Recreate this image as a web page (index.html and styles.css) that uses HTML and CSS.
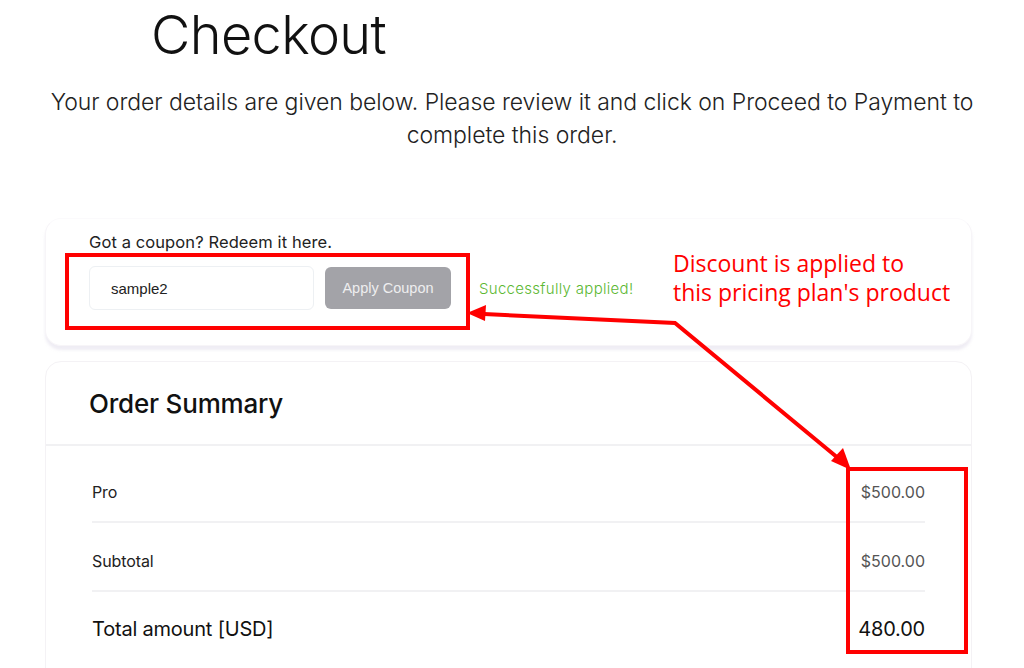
FILE: index.html
```html
<!DOCTYPE html>
<html lang="en">
<head>
<meta charset="utf-8">
<title>Checkout</title>
<link rel="stylesheet" href="styles.css">
</head>
<body>
<main class="page">
  <header class="hero">
    <h1 class="hero-title">Checkout</h1>
    <p class="hero-text">Your order details are given below. Please review it and click on Proceed to Payment to complete this order.</p>
  </header>

  <section class="coupon-card">
    <p class="coupon-label">Got a coupon? Redeem it here.</p>
    <div class="coupon-row">
      <input class="coupon-input" type="text" value="sample2">
      <button class="coupon-btn" type="button">Apply Coupon</button>
      <span class="coupon-ok">Successfully applied!</span>
    </div>
  </section>

  <section class="summary-card">
    <h2 class="summary-title">Order Summary</h2>
    <div class="summary-body">
      <div class="summary-row">
        <span class="row-label">Pro</span>
        <span class="row-value">$500.00</span>
      </div>
      <div class="summary-row">
        <span class="row-label">Subtotal</span>
        <span class="row-value">$500.00</span>
      </div>
      <div class="summary-row total">
        <span class="row-label">Total amount [USD]</span>
        <span class="row-value">480.00</span>
      </div>
    </div>
  </section>
</main>

<div class="note">Discount is applied to<br>this pricing plan's product</div>

<svg class="annot" width="1024" height="668" viewBox="0 0 1024 668" aria-hidden="true">
  <g fill="none" stroke="#ff0000" stroke-width="4">
    <rect x="67" y="255" width="401" height="73"/>
    <rect x="848" y="469" width="118" height="183"/>
    <polyline points="484,314 675,323 838,458" stroke-linejoin="miter"/>
  </g>
  <g fill="#ff0000">
    <polygon points="467,313 486,305 485,321"/>
    <polygon points="851,470 831,461 843,448"/>
  </g>
</svg>
</body>
</html>
```

FILE: styles.css
```css
* { box-sizing: border-box; }

html, body {
  margin: 0;
  padding: 0;
  background: #ffffff;
}

body {
  position: relative;
  width: 1024px;
  height: 668px;
  overflow: hidden;
  font-family: "Inter", "Liberation Sans", sans-serif;
  color: #1d1d1f;
}

.page {
  display: flex;
  flex-direction: column;
}

.hero {
  padding: 0 40px;
}

.hero-title {
  margin: 0;
  padding: 3px 0 0 111px;
  font-size: 54px;
  line-height: 64px;
  font-weight: 300;
  letter-spacing: -0.6px;
  color: #111;
}

.hero-text {
  margin: 19px 0 0;
  text-align: center;
  font-size: 23px;
  line-height: 33px;
  font-weight: 300;
  letter-spacing: -0.05px;
  color: #222;
}

.coupon-card {
  margin: 66px 52px 0 45px;
  height: 128px;
  padding: 13px 43px 0;
  background: #fff;
  border: 1px solid #f7f5f8;
  border-top-color: #fbfafc;
  border-radius: 16px;
  box-shadow: 0 4px 3px rgba(232, 230, 240, 0.7);
}

.coupon-label {
  margin: 0;
  font-size: 16.5px;
  line-height: 20px;
  color: #222;
  letter-spacing: 0.1px;
}

.coupon-row {
  display: flex;
  align-items: center;
  margin-top: 14px;
}

.coupon-input {
  width: 225px;
  height: 44px;
  padding: 0 21px;
  border: 1px solid #edf0f3;
  border-radius: 6px;
  font-family: "Liberation Sans", Arial, sans-serif;
  font-size: 15px;
  color: #222;
  background: #fff;
  outline: none;
}

.coupon-btn {
  margin-left: 11px;
  width: 126px;
  height: 42px;
  border: 0;
  border-radius: 6px;
  background: #a3a3a8;
  color: #eeeeef;
  font-family: "Liberation Sans", Arial, sans-serif;
  font-size: 14.5px;
}

.coupon-ok {
  margin-left: 28px;
  font-size: 15px;
  font-weight: 300;
  color: #5cb833;
  letter-spacing: 0.3px;
}

.summary-card {
  margin: 15px 52px 0 45px;
  height: 340px;
  flex: none;
  background: #fff;
  border: 1px solid #f4f2f5;
  border-radius: 16px;
}

.summary-title {
  margin: 0;
  height: 84px;
  padding: 0 43px;
  display: flex;
  align-items: center;
  font-size: 26px;
  font-weight: 500;
  letter-spacing: -0.2px;
  color: #111;
  border-bottom: 2px solid #f1f1f3;
}

.summary-body {
  padding: 8px 46px 0 46px;
}

.summary-row {
  display: flex;
  justify-content: space-between;
  align-items: flex-start;
  height: 69px;
  padding-top: 28px;
  border-bottom: 2px solid #f1f1f3;
  font-size: 16px;
  line-height: 20px;
}

.row-label {
  color: #222;
  letter-spacing: -0.1px;
}

.row-value {
  color: #555;
}

.summary-row.total {
  border-bottom: 0;
  padding-top: 25px;
}

.summary-row.total .row-label,
.summary-row.total .row-value {
  font-size: 20px;
  line-height: 24px;
  color: #111;
  font-weight: 400;
  letter-spacing: -0.2px;
}

.note {
  position: absolute;
  left: 673px;
  top: 249px;
  font-family: "Open Sans", "Noto Sans", sans-serif;
  font-size: 23px;
  line-height: 29px;
  color: #ff0000;
}

.annot {
  position: absolute;
  left: 0;
  top: 0;
  pointer-events: none;
}
```
